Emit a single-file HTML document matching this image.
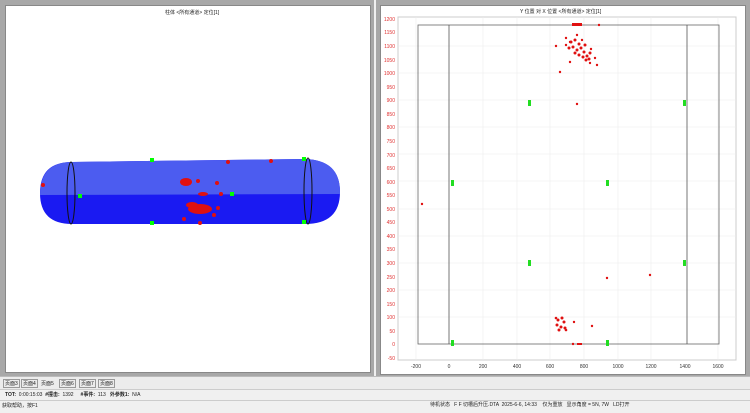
<!DOCTYPE html>
<html><head><meta charset="utf-8"><style>
body{margin:0;width:750px;height:413px;background:#f0f0f0;font-family:"Liberation Sans","Noto Sans CJK SC",sans-serif;position:relative;overflow:hidden}
.t{position:absolute;font-size:6px;color:#222;white-space:nowrap}
.tab{position:absolute;top:379px;font-size:5px;border:1px solid #999;padding:0 1px;color:#222;white-space:nowrap}
</style></head><body>
<div style="position:absolute;left:0;top:0;width:374px;height:376px;background:#a8a8a8"></div>
<div style="position:absolute;left:5px;top:5px;width:364px;height:366px;background:#fff;border:1px solid #888"></div>
<div class="t" style="left:165px;top:9px;font-size:5px">柱体 &lt;所有通道&gt; 定位[1]</div>
<div style="position:absolute;left:376px;top:0;width:374px;height:376px;background:#a8a8a8"></div>
<div style="position:absolute;left:380px;top:5px;width:364px;height:368px;background:#fff;border:1px solid #888"></div>
<div class="t" style="left:520px;top:8px;font-size:5px">Y 位置 对 X 位置 &lt;所有通道&gt; 定位[1]</div>
<svg width="750" height="413" style="position:absolute;left:0;top:0">
<path d="M72 162 L305 159 Q340 160 340 192 Q340 224 305 224 L72 224 Q40 224 40 193 Q40 162 72 162Z" fill="#1a1af2"/>
<path d="M72 162 L305 159 Q340 160 340 192 L340 194 L40 195 Q40 162 72 162Z" fill="#4c5cf0"/>
<ellipse cx="71" cy="193" rx="4" ry="31" fill="none" stroke="#111" stroke-width="1"/>
<ellipse cx="308" cy="191" rx="4" ry="33" fill="none" stroke="#111" stroke-width="1"/>
<g fill="#0f0"><rect x="150" y="158" width="4" height="4"/><rect x="78" y="194" width="4" height="4"/><rect x="150" y="221" width="4" height="4"/><rect x="230" y="192" width="4" height="4"/><rect x="302" y="157" width="4" height="4"/><rect x="302" y="220" width="4" height="4"/></g>
<g fill="#e01010">
<ellipse cx="186" cy="182" rx="6" ry="4"/><ellipse cx="200" cy="209" rx="12" ry="5"/><ellipse cx="192" cy="205" rx="6" ry="3"/><ellipse cx="203" cy="194" rx="5" ry="2"/>
<circle cx="198" cy="181" r="2"/><circle cx="217" cy="183" r="2"/><circle cx="228" cy="162" r="2"/><circle cx="271" cy="161" r="2"/><circle cx="184" cy="219" r="2"/><circle cx="200" cy="223" r="2"/><circle cx="218" cy="208" r="2"/><circle cx="43" cy="185" r="2"/><circle cx="221" cy="194" r="2"/><circle cx="214" cy="215" r="2"/>
</g>
<rect x="398" y="17" width="338" height="343" fill="none" stroke="#ccc"/>
<g stroke="#ececec" stroke-width="0.6">
<line x1="416" y1="17" x2="416" y2="360"/><line x1="483" y1="17" x2="483" y2="360"/><line x1="517" y1="17" x2="517" y2="360"/><line x1="550" y1="17" x2="550" y2="360"/><line x1="584" y1="17" x2="584" y2="360"/><line x1="618" y1="17" x2="618" y2="360"/><line x1="651" y1="17" x2="651" y2="360"/><line x1="718" y1="17" x2="718" y2="360"/>
<line x1="398" y1="46" x2="736" y2="46"/><line x1="398" y1="73" x2="736" y2="73"/><line x1="398" y1="100" x2="736" y2="100"/><line x1="398" y1="127" x2="736" y2="127"/><line x1="398" y1="154" x2="736" y2="154"/><line x1="398" y1="181" x2="736" y2="181"/><line x1="398" y1="209" x2="736" y2="209"/><line x1="398" y1="236" x2="736" y2="236"/><line x1="398" y1="263" x2="736" y2="263"/><line x1="398" y1="290" x2="736" y2="290"/><line x1="398" y1="317" x2="736" y2="317"/>
</g>
<rect x="418" y="25" width="301" height="319" fill="none" stroke="#666" stroke-width="0.8"/>
<line x1="449" y1="25" x2="449" y2="344" stroke="#555" stroke-width="0.8"/>
<line x1="687" y1="25" x2="687" y2="344" stroke="#555" stroke-width="0.8"/>
<g font-size="5" fill="#e03030" text-anchor="end" font-family="Liberation Sans">
<text x="395" y="21">1200</text><text x="395" y="34">1150</text><text x="395" y="48">1100</text><text x="395" y="62">1050</text><text x="395" y="75">1000</text><text x="395" y="89">950</text><text x="395" y="102">900</text><text x="395" y="116">850</text><text x="395" y="129">800</text><text x="395" y="143">750</text><text x="395" y="157">700</text><text x="395" y="170">650</text><text x="395" y="184">600</text><text x="395" y="197">550</text><text x="395" y="211">500</text><text x="395" y="224">450</text><text x="395" y="238">400</text><text x="395" y="251">350</text><text x="395" y="265">300</text><text x="395" y="279">250</text><text x="395" y="292">200</text><text x="395" y="306">150</text><text x="395" y="319">100</text><text x="395" y="333">50</text><text x="395" y="346">0</text><text x="395" y="360">-50</text>
</g>
<g font-size="5" fill="#333" text-anchor="middle" font-family="Liberation Sans">
<text x="416" y="368">-200</text><text x="449" y="368">0</text><text x="483" y="368">200</text><text x="517" y="368">400</text><text x="550" y="368">600</text><text x="584" y="368">800</text><text x="618" y="368">1000</text><text x="651" y="368">1200</text><text x="685" y="368">1400</text><text x="718" y="368">1600</text>
</g>
<g fill="#2d2"><rect x="528" y="100" width="3" height="6"/><rect x="683" y="100" width="3" height="6"/><rect x="451" y="180" width="3" height="6"/><rect x="606" y="180" width="3" height="6"/><rect x="528" y="260" width="3" height="6"/><rect x="683" y="260" width="3" height="6"/><rect x="451" y="340" width="3" height="6"/><rect x="606" y="340" width="3" height="6"/></g>
<g fill="#e01010">
<rect x="572" y="23" width="10" height="3"/><circle cx="599" cy="25" r="1.2"/>
<circle cx="571" cy="42" r="1.5"/><circle cx="575" cy="40" r="1.5"/><circle cx="579" cy="44" r="1.5"/><circle cx="573" cy="47" r="1.5"/><circle cx="577" cy="50" r="1.5"/><circle cx="581" cy="48" r="1.5"/><circle cx="584" cy="52" r="1.5"/><circle cx="579" cy="55" r="1.5"/><circle cx="583" cy="57" r="1.5"/><circle cx="587" cy="56" r="1.5"/><circle cx="586" cy="60" r="1.5"/><circle cx="589" cy="59" r="1.5"/><circle cx="575" cy="53" r="1.5"/><circle cx="569" cy="48" r="1.5"/><circle cx="585" cy="45" r="1.5"/><circle cx="590" cy="53" r="1.5"/>
<circle cx="566" cy="38" r="1.2"/><circle cx="570" cy="42" r="1.2"/><circle cx="566" cy="45" r="1.2"/><circle cx="556" cy="46" r="1.2"/><circle cx="577" cy="35" r="1.2"/><circle cx="582" cy="40" r="1.2"/><circle cx="591" cy="49" r="1.2"/><circle cx="595" cy="58" r="1.2"/><circle cx="590" cy="63" r="1.2"/><circle cx="597" cy="65" r="1.2"/><circle cx="560" cy="72" r="1.2"/><circle cx="570" cy="62" r="1.2"/><circle cx="577" cy="104" r="1.2"/><circle cx="422" cy="204" r="1.2"/><circle cx="607" cy="278" r="1.2"/><circle cx="650" cy="275" r="1.2"/><circle cx="574" cy="322" r="1.2"/><circle cx="592" cy="326" r="1.2"/><circle cx="573" cy="344" r="1.2"/><rect x="577" y="343" width="5" height="2"/>
<circle cx="558" cy="320" r="1.5"/><circle cx="562" cy="318" r="1.5"/><circle cx="564" cy="322" r="1.5"/><circle cx="557" cy="325" r="1.5"/><circle cx="561" cy="327" r="1.5"/><circle cx="565" cy="328" r="1.5"/><circle cx="559" cy="330" r="1.5"/><circle cx="556" cy="318" r="1.3"/><circle cx="566" cy="330" r="1.3"/>
</g>
</svg>
<div style="position:absolute;left:0;top:376px;width:750px;height:13px;background:#ececec;border-top:1px solid #bbb"></div>
<div class="tab" style="left:3px">页面3</div>
<div class="tab" style="left:21px">页面4</div>
<div class="t" style="left:41px;top:380px;font-size:5px">页面5</div>
<div class="tab" style="left:59px">页面6</div>
<div class="tab" style="left:79px">页面7</div>
<div class="tab" style="left:98px">页面8</div>
<div style="position:absolute;left:0;top:389px;width:750px;height:10px;border-top:1px solid #ccc;border-bottom:1px solid #ccc"></div>
<div class="t" style="left:5px;top:391px;font-size:5px"><b>TOT:</b> &nbsp;0:00:15:03 &nbsp;<b>#撞击:</b> &nbsp;1392 &nbsp;&nbsp;&nbsp;&nbsp;<b>#事件:</b> &nbsp;113 &nbsp;&nbsp;<b>外参数1:</b> &nbsp;N/A</div>
<div class="t" style="left:2px;top:402px;font-size:5px">获取帮助，按F1</div>
<div class="t" style="left:430px;top:401px;font-size:5px">待机状态 &nbsp;&nbsp;F F 切槽后升压.DTA &nbsp;2025-6-6, 14:33 &nbsp;&nbsp;&nbsp;仅为重放 &nbsp;&nbsp;显示角度 = 5N, 7W &nbsp;&nbsp;LD打开</div>
</body></html>
